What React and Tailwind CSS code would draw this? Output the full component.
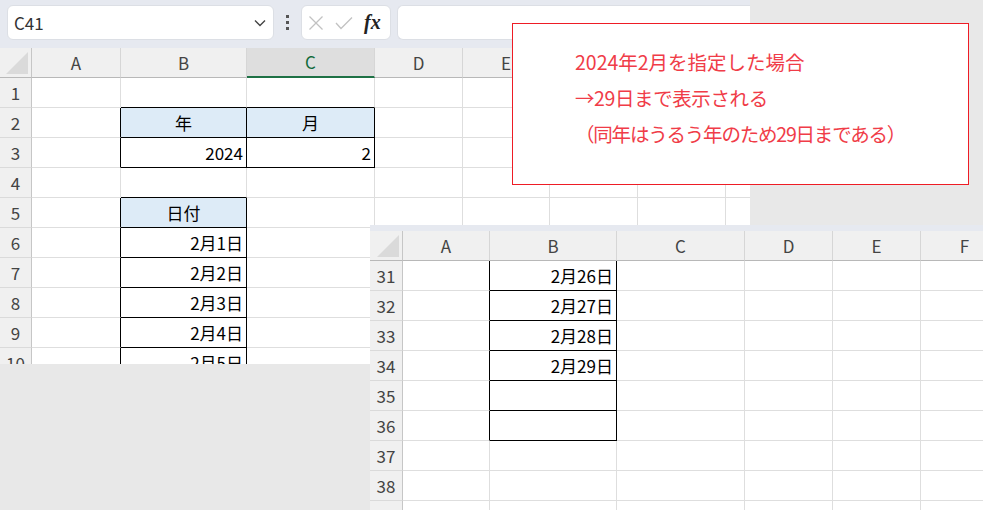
import React from "react";

const FONT = "font-['Noto_Sans_CJK_JP','Noto_Sans',sans-serif]";

function Corner() {
  return (
    <div className="flex items-end justify-end pr-[3px] pb-[3px] bg-[#f0f0f0] border-r border-b border-r-[#c6c6c6] border-b-[#b8b8b8]">
      <svg width="22" height="22" viewBox="0 0 22 22">
        <polygon points="22,0 22,22 0,22" fill="#dadada" />
      </svg>
    </div>
  );
}

function Sheet({ template, colLabels, rows, data, table, selectedCol }) {
  const isT = (r, c) => table.has(`${r}:${c}`);
  return (
    <div className={`grid ${template} auto-rows-[30px]`}>
      <Corner />
      {colLabels.map((l, i) => {
        const sel = i === selectedCol;
        return (
          <div
            key={"h" + i}
            className={
              "flex items-center justify-center text-[17px] border-r border-r-[#d6d6d6] " +
              (sel
                ? "bg-[#dedede] text-[#106b3a] border-b-2 border-b-[#1e7145]"
                : "bg-[#f0f0f0] text-[#444] border-b border-b-[#b8b8b8]")
            }
          >
            {l}
          </div>
        );
      })}
      {rows.map((r, ri) => {
        const nextR = rows[ri + 1];
        return (
          <React.Fragment key={"r" + r}>
            <div className="flex items-center justify-center bg-[#f0f0f0] text-[#444] text-[17px] border-r border-b border-r-[#c6c6c6] border-b-[#dadada]">
              {r}
            </div>
            {colLabels.map((_, c) => {
              const self = isT(r, c);
              const rightBlack = self || isT(r, c + 1);
              const bottomBlack = self || (nextR !== undefined && isT(nextR, c));
              const cell = data[`${r}:${c}`];
              return (
                <div
                  key={c}
                  className={
                    "flex items-center text-[17px] text-black border-r border-b " +
                    (rightBlack ? "border-r-black " : "border-r-[#dedede] ") +
                    (bottomBlack ? "border-b-black " : "border-b-[#dedede] ") +
                    (cell && cell.head ? "bg-[#ddebf7] " : "bg-white ") +
                    (cell && cell.center ? "justify-center" : "justify-end pr-[3px]")
                  }
                >
                  {cell ? cell.t : ""}
                </div>
              );
            })}
          </React.Fragment>
        );
      })}
    </div>
  );
}

function FormulaBar() {
  return (
    <div className="h-[48px] bg-[#e6e9f0] flex items-start pt-[5px] pl-[7px]">
      <div className="w-[267px] h-[35px] bg-white rounded-[6px] border border-[#dcdfe5] flex items-center pl-[6px] pr-[6px] justify-between">
        <span className="text-[17px] text-[#333]">C41</span>
        <svg width="14" height="10" viewBox="0 0 14 10">
          <polyline points="2,2.5 7,7.5 12,2.5" fill="none" stroke="#444" strokeWidth="1.4" />
        </svg>
      </div>
      <div className="w-[27px] h-[35px] flex flex-col items-center justify-center gap-[3px]">
        <div className="w-[3px] h-[3px] bg-[#555]" />
        <div className="w-[3px] h-[3px] bg-[#555]" />
        <div className="w-[3px] h-[3px] bg-[#555]" />
      </div>
      <div className="w-[90px] h-[35px] bg-white rounded-[6px] border border-[#dcdfe5] flex items-center pl-[6px] gap-[11px]">
        <svg width="16" height="16" viewBox="0 0 16 16">
          <line x1="1.5" y1="1.5" x2="14.5" y2="14.5" stroke="#c2c2c2" strokeWidth="1.3" />
          <line x1="14.5" y1="1.5" x2="1.5" y2="14.5" stroke="#c2c2c2" strokeWidth="1.3" />
        </svg>
        <svg width="18" height="14" viewBox="0 0 18 14">
          <polyline points="1,7 6,12.5 17,1.5" fill="none" stroke="#c2c2c2" strokeWidth="1.3" />
        </svg>
        <span className="font-['Liberation_Serif',serif] italic font-bold text-[20px] text-[#222] leading-none -mt-[2px]">
          fx
        </span>
      </div>
      <div className="ml-[6px] flex-1 h-[35px] bg-white rounded-l-[6px] border border-r-0 border-[#dcdfe5]" />
    </div>
  );
}

export default function App() {
  const d1 = {
    "2:1": { t: "年", center: true, head: true },
    "2:2": { t: "月", center: true, head: true },
    "3:1": { t: "2024" },
    "3:2": { t: "2" },
    "5:1": { t: "日付", center: true, head: true },
    "6:1": { t: "2月1日" },
    "7:1": { t: "2月2日" },
    "8:1": { t: "2月3日" },
    "9:1": { t: "2月4日" },
    "10:1": { t: "2月5日" },
  };
  const t1 = new Set(["2:1", "2:2", "3:1", "3:2", "5:1", "6:1", "7:1", "8:1", "9:1", "10:1"]);

  const d2 = {
    "31:1": { t: "2月26日" },
    "32:1": { t: "2月27日" },
    "33:1": { t: "2月28日" },
    "34:1": { t: "2月29日" },
  };
  const t2 = new Set(["31:1", "32:1", "33:1", "34:1", "35:1", "36:1"]);

  return (
    <div className={`relative w-[983px] h-[510px] overflow-hidden bg-[#e8e8e8] ${FONT}`}>
      <div className="w-[750px] h-[364px] overflow-hidden bg-white">
        <FormulaBar />
        <Sheet
          template="grid-cols-[32px_89px_126px_128px_88px_87px_88px_88px_88px]"
          colLabels={["A", "B", "C", "D", "E", "F", "G", "H"]}
          rows={[1, 2, 3, 4, 5, 6, 7, 8, 9, 10]}
          data={d1}
          table={t1}
          selectedCol={2}
        />
      </div>

      <div className="absolute left-[370px] top-[225px] w-[613px] h-[285px] overflow-hidden bg-white">
        <div className="h-[6px] bg-[#e6e9f0]" />
        <Sheet
          template="grid-cols-[33px_87px_127px_128px_88px_88px_88px]"
          colLabels={["A", "B", "C", "D", "E", "F"]}
          rows={[31, 32, 33, 34, 35, 36, 37, 38, 39]}
          data={d2}
          table={t2}
          selectedCol={-1}
        />
      </div>

      <div className="absolute left-[512px] top-[23px] w-[457px] h-[162px] bg-white border border-[#ee1c25] pl-[62px] pt-[20px]">
        <div className="text-[19.5px] leading-[36px] text-[#f03c48] whitespace-nowrap">
          <div>2024年2月を指定した場合</div>
          <div className="tracking-[-0.4px]">→29日まで表示される</div>
          <div className="tracking-[-1.2px]">（同年はうるう年のため29日まである）</div>
        </div>
      </div>
    </div>
  );
}
